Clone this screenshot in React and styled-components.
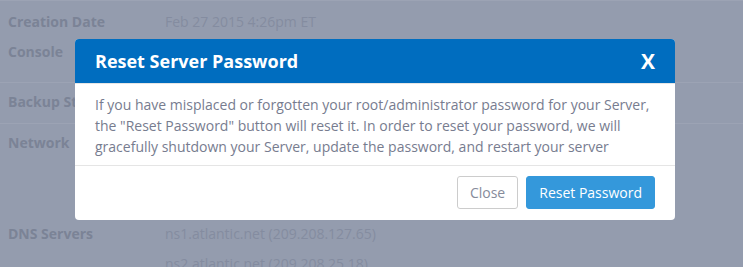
import React from "react";
import styled, { createGlobalStyle } from "styled-components";

const Global = createGlobalStyle`
  html, body { margin: 0; padding: 0; }
  body {
    background: #949cae;
    font-family: "Open Sans", "Liberation Sans", sans-serif;
    overflow: hidden;
  }
`;

const Page = styled.div`
  position: relative;
  width: 743px;
  height: 267px;
  overflow: hidden;
  background: #949cae;
`;

const Section = styled.div`
  border-top: 1px solid #9ca3b4;
  padding: ${(p) => p.$pad || "4px 0 6px"};
`;

const Row = styled.div`
  display: grid;
  grid-template-columns: 157px 1fr;
  padding-left: 8px;
  min-height: ${(p) => p.$h || 30}px;
  align-items: start;
`;

const Label = styled.div`
  font-weight: 700;
  font-size: 14px;
  line-height: 30px;
  color: #7b8396;
`;

const Value = styled.div`
  font-size: 14px;
  line-height: 30px;
  color: #848ca0;
`;

const Modal = styled.div`
  position: absolute;
  left: 75px;
  top: 39px;
  width: 600px;
  background: #fff;
  border-radius: 4px;
  overflow: hidden;
`;

const Header = styled.div`
  height: 44px;
  background: #006dbf;
  display: flex;
  align-items: center;
  justify-content: space-between;
  padding: 0 20px;
  border-bottom: 1px solid #e5e5e5;
`;

const Title = styled.h4`
  margin: 0;
  font-size: 18px;
  font-weight: 700;
  color: #fff;
`;

const CloseX = styled.span`
  font-size: 21px;
  font-weight: 700;
  color: #fff;
  line-height: 1;
`;

const Body = styled.div`
  padding: 10px 20px 8px;
  font-size: 14px;
  line-height: 21px;
  color: #777c8f;
`;

const Footer = styled.div`
  border-top: 1px solid #e5e5e5;
  padding: 10px 20px 11px;
  display: flex;
  justify-content: flex-end;
  gap: 8px;
`;

const Button = styled.button`
  height: 33px;
  padding: 0 12px;
  border-radius: 3px;
  font-family: inherit;
  font-size: 14px;
  cursor: pointer;
  border: 1px solid ${(p) => (p.$primary ? "#3498db" : "#cccccc")};
  background: ${(p) => (p.$primary ? "#3498db" : "#fff")};
  color: ${(p) => (p.$primary ? "#fff" : "#868b9b")};
`;

export default function App() {
  return (
    <Page>
      <Global />
      <Section $pad="6px 0 15px">
        <Row>
          <Label>Creation Date</Label>
          <Value>Feb 27 2015 4:26pm ET</Value>
        </Row>
        <Row>
          <Label>Console</Label>
          <Value />
        </Row>
      </Section>
      <Section>
        <Row>
          <Label>Backup Status</Label>
          <Value />
        </Row>
      </Section>
      <Section $pad="4px 0 0">
        <Row $h={91}>
          <Label>Network</Label>
          <Value />
        </Row>
        <Row>
          <Label>DNS Servers</Label>
          <Value>ns1.atlantic.net (209.208.127.65)</Value>
        </Row>
        <Row>
          <Label />
          <Value>ns2.atlantic.net (209.208.25.18)</Value>
        </Row>
      </Section>

      <Modal>
        <Header>
          <Title>Reset Server Password</Title>
          <CloseX>X</CloseX>
        </Header>
        <Body>
          If you have misplaced or forgotten your root/administrator password for your Server,
          the "Reset Password" button will reset it. In order to reset your password, we will
          gracefully shutdown your Server, update the password, and restart your server
        </Body>
        <Footer>
          <Button>Close</Button>
          <Button $primary>Reset Password</Button>
        </Footer>
      </Modal>
    </Page>
  );
}
